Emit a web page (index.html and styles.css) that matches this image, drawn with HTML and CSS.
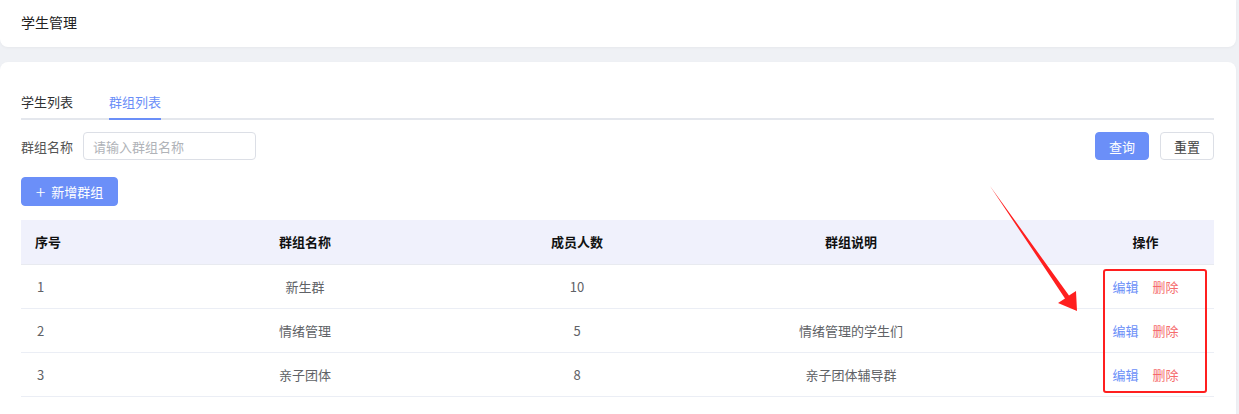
FILE: index.html
```html
<!DOCTYPE html>
<html lang="zh-CN">
<head>
    <meta charset="UTF-8">
    <meta name="viewport" content="width=device-width, initial-scale=1.0">
    <title>学生管理</title>
    <link rel="stylesheet" href="styles.css">
</head>
<body>
    <div class="page">
        <div class="card head-card">学生管理</div>

        <div class="card main-card">
            <div class="tabs">
                <div class="tab">学生列表</div>
                <div class="tab active">群组列表</div>
            </div>

            <div class="search-row">
                <div class="search-left">
                    <span class="label">群组名称</span>
                    <input class="input" type="text" placeholder="请输入群组名称">
                </div>
                <div class="search-right">
                    <button class="btn btn-primary">查询</button>
                    <button class="btn">重置</button>
                </div>
            </div>

            <div class="toolbar">
                <button class="btn btn-primary btn-add"><span class="plus">+</span>新增群组</button>
            </div>

            <table class="table">
                <colgroup>
                    <col style="width: 60px">
                    <col style="width: 448px">
                    <col style="width: 96px">
                    <col style="width: 452px">
                    <col>
                </colgroup>
                <thead>
                    <tr>
                        <th class="left">序号</th>
                        <th>群组名称</th>
                        <th>成员人数</th>
                        <th>群组说明</th>
                        <th>操作</th>
                    </tr>
                </thead>
                <tbody>
                    <tr>
                        <td class="left">1</td>
                        <td>新生群</td>
                        <td>10</td>
                        <td></td>
                        <td><a class="link edit">编辑</a><a class="link del">删除</a></td>
                    </tr>
                    <tr>
                        <td class="left">2</td>
                        <td>情绪管理</td>
                        <td>5</td>
                        <td>情绪管理的学生们</td>
                        <td><a class="link edit">编辑</a><a class="link del">删除</a></td>
                    </tr>
                    <tr>
                        <td class="left">3</td>
                        <td>亲子团体</td>
                        <td>8</td>
                        <td>亲子团体辅导群</td>
                        <td><a class="link edit">编辑</a><a class="link del">删除</a></td>
                    </tr>
                </tbody>
            </table>
        </div>
    </div>

    <!-- 标注：红框 + 箭头 -->
    <div class="mark-box"></div>
    <svg class="mark-arrow" width="1239" height="414" viewBox="0 0 1239 414">
        <polygon points="990,186 1069,295.6 1076,291 1077,311 1058,303 1065,298.4" fill="#ff1f1f"/>
    </svg>
</body>
</html>
```

FILE: styles.css
```css
* {
    box-sizing: border-box;
}

body {
    margin: 0;
    padding: 0;
    background-color: #eff1f5;
    font-family: "Noto Sans CJK SC", "Noto Sans", sans-serif;
    font-size: 13px;
    color: #303133;
    overflow: hidden;
}

.page {
    width: 1236px;
}

.card {
    background: #fff;
    border-radius: 8px;
    box-shadow: 0 1px 3px rgba(0, 0, 0, 0.04);
}

.head-card {
    height: 47px;
    line-height: 44px;
    padding: 0 21px 3px;
    font-size: 14px;
    color: #222;
    border-radius: 0 0 8px 8px;
}

.main-card {
    margin-top: 15px;
    padding: 24px 22px 40px 21px;
    min-height: 360px;
}

/* tabs */
.tabs {
    display: flex;
    gap: 36px;
    border-bottom: 2px solid #e4e7ed;
}

.tab {
    height: 32px;
    line-height: 32px;
    color: #303133;
    position: relative;
}

.tab.active {
    color: #6b8ff8;
}

.tab.active::after {
    content: "";
    position: absolute;
    left: 0;
    right: 0;
    bottom: -2px;
    height: 2px;
    background: #6b8ff8;
}

/* search */
.search-row {
    display: flex;
    justify-content: space-between;
    align-items: center;
    margin-top: 12px;
}

.search-left {
    display: flex;
    align-items: center;
    gap: 10px;
}

.label {
    color: #555;
}

.input {
    width: 173px;
    height: 28px;
    border: 1px solid #dcdfe6;
    border-radius: 4px;
    padding: 0 9px;
    font-family: inherit;
    font-size: 13px;
    outline: none;
}

.input::placeholder {
    color: #b0b3b8;
}

.search-right {
    display: flex;
    gap: 11px;
}

.btn {
    height: 28px;
    width: 54px;
    padding: 0;
    border: 1px solid #dcdfe6;
    border-radius: 4px;
    background: #fff;
    color: #444;
    font-family: inherit;
    font-size: 13px;
    cursor: pointer;
}

.btn-primary {
    background: #6b8ff8;
    border-color: #6b8ff8;
    color: #fff;
}

.toolbar {
    margin-top: 17px;
}

.btn-add {
    width: 97px;
    height: 29px;
    display: flex;
    align-items: center;
    justify-content: center;
    gap: 6px;
}

.plus {
    font-size: 18px;
    font-weight: 300;
    line-height: 1;
    margin-top: -2px;
}

/* table */
.table {
    width: 100%;
    margin-top: 14px;
    border-collapse: collapse;
    table-layout: fixed;
}

.table th {
    height: 44px;
    background: #f0f1fc;
    color: #111;
    font-weight: bold;
    text-align: center;
    border-bottom: 1px solid #e8eaf0;
}

.table td {
    height: 44px;
    text-align: center;
    color: #606266;
    border-bottom: 1px solid #ebeef5;
}

.table th.left {
    text-align: left;
    padding-left: 14px;
}

.table td.left {
    text-align: left;
    padding-left: 16px;
}

.link {
    cursor: pointer;
}

.link.edit {
    color: #6b8ff8;
    margin-right: 14px;
}

.link.del {
    color: #f56c6c;
}

/* annotation overlay */
.mark-box {
    position: absolute;
    left: 1103px;
    top: 269px;
    width: 104px;
    height: 124px;
    border: 2px solid #ff1f1f;
    border-radius: 3px;
}

.mark-arrow {
    position: absolute;
    left: 0;
    top: 0;
    pointer-events: none;
}
```
